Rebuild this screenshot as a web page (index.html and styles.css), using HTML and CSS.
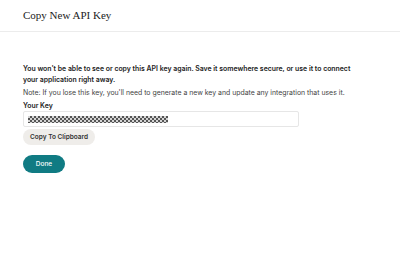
FILE: index.html
```html
<!DOCTYPE html>
<html>
<head>
<meta charset="utf-8">
<link rel="stylesheet" href="styles.css">
</head>
<body>
<header class="header">
  <h1 class="title">Copy New API Key</h1>
</header>
<main class="content">
  <p class="warning">You won't be able to see or copy this API key again. Save it somewhere secure, or use it to connect your application right away.</p>
  <p class="note">Note: If you lose this key, you'll need to generate a new key and update any integration that uses it.</p>
  <label class="label">Your Key</label>
  <div class="field"><span class="masked"></span></div>
  <button class="btn-copy">Copy To Clipboard</button>
  <button class="btn-done">Done</button>
</main>
</body>
</html>
```
FILE: styles.css
```css
* { box-sizing: border-box; }
body {
  margin: 0;
  background: #fff;
  font-family: "Inter", "Noto Sans", sans-serif;
  color: #222;
}
.header {
  height: 32px;
  border-bottom: 1px solid #ececec;
  padding: 0 23px;
  display: flex;
  align-items: center;
}
.title {
  margin: 0 0 1px;
  font-family: "Liberation Serif", serif;
  font-weight: normal;
  font-size: 11px;
  color: #222;
}
.content {
  padding: 31px 23px 0;
  display: flex;
  flex-direction: column;
  align-items: flex-start;
}
.warning {
  margin: 0;
  font-size: 6.9px;
  font-weight: 600;
  line-height: 11px;
  width: 340px;
}
.note {
  margin: 2px 0 0;
  font-size: 6.9px;
  line-height: 11px;
  color: #444;
}
.label {
  margin-top: 2px;
  font-size: 6.9px;
  font-weight: 600;
  line-height: 11px;
}
.field {
  margin-top: 0;
  width: 276px;
  height: 16px;
  border: 1px solid #e6e6e6;
  border-radius: 2px;
  display: flex;
  align-items: center;
  padding-left: 4px;
}
.masked {
  width: 140px;
  height: 7px;
  background: repeating-conic-gradient(#555 0 25%, #d4d4d4 0 50%) 0 0 / 4px 4px;
}
.btn-copy {
  margin-top: 2px;
  height: 16px;
  padding: 0 7px;
  border: none;
  border-radius: 8px;
  background: #efedea;
  font-family: inherit;
  font-size: 6.5px;
  font-weight: 600;
  color: #333;
}
.btn-done {
  margin-top: 10px;
  height: 18px;
  width: 42px;
  border: none;
  border-radius: 9px;
  background: #107b83;
  color: #fff;
  font-family: inherit;
  font-size: 6.5px;
  font-weight: 500;
}
```
